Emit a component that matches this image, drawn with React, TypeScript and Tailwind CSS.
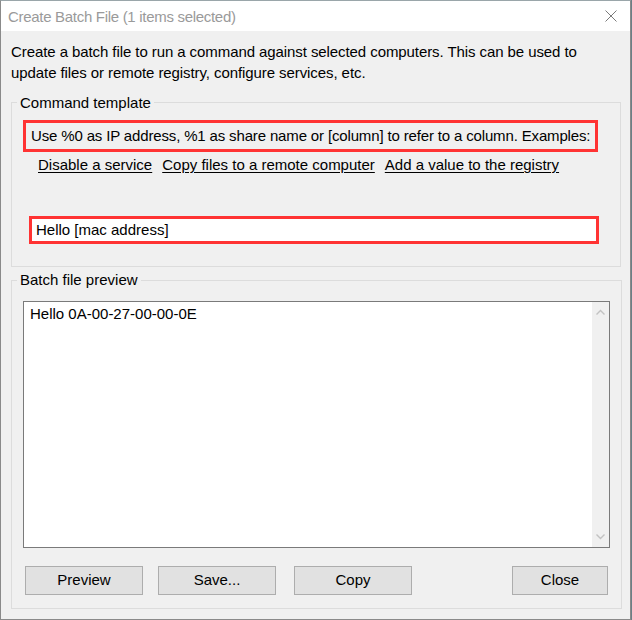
import React from 'react';

const font = { fontFamily: '"Segoe UI", "Liberation Sans", Arial, sans-serif' };

const Chevron = ({ up }: { up?: boolean }) => (
  <svg width="9" height="6" viewBox="0 0 9 6" className="block">
    <path d={up ? 'M0.5 5.5 L4.5 1.5 L8.5 5.5' : 'M0.5 0.5 L4.5 4.5 L8.5 0.5'} fill="none" stroke="#c2c2c2" strokeWidth="1.4" />
  </svg>
);

const WinButton = ({ label, className = '' }: { label: string; className?: string }) => (
  <button className={`h-[29px] bg-[#e1e1e1] border border-[#adadad] text-[15px] text-black ${className}`}>
    {label}
  </button>
);

export default function App() {
  return (
    <div className="w-[632px] h-[620px] bg-[#6b7f86] overflow-hidden" style={font}>
      <div className="w-[631px] h-[620px] flex flex-col bg-[#f0f0f0] border-x border-b border-[#8a8a8a] border-t border-t-[#9aa6aa]">
        {/* title bar */}
        <div className="h-[30px] bg-white flex items-center justify-between pl-[7px] pr-[13px]">
          <span className="pt-[2px] text-[15px] tracking-[-0.3px] text-[#9a9a9a]">Create Batch File (1 items selected)</span>
          <svg width="12" height="12" viewBox="0 0 12 12">
            <path d="M0.5 0.5 L11.5 11.5 M11.5 0.5 L0.5 11.5" stroke="#7a7a7a" strokeWidth="1" />
          </svg>
        </div>

        <div className="flex-1 flex flex-col px-[10px] pt-[10px]">
          <p className="text-[15px] leading-[21px] tracking-[-0.08px] text-black">
            Create a batch file to run a command against selected computers. This can be used to
            <br />
            update files or remote registry, configure services, etc.
          </p>

          {/* Command template */}
          <fieldset className="mt-[10px] w-[610px] h-[174px] border border-[#dcdcdc] px-[11px]">
            <legend className="ml-[-6px] px-[3px] pt-[1px] text-[15px] leading-[18px] text-black">Command template</legend>
            <div className="mt-[8px] h-[32px] w-[575px] border-[3px] border-[#ff3333] flex items-center pl-[5px] text-[15px] tracking-[-0.15px] whitespace-nowrap text-black">
              Use %0 as IP address, %1 as share name or [column] to refer to a column. Examples:
            </div>
            <div className="flex gap-[10px] pl-[15px] mt-[2px] text-[15px] leading-[21px] text-black">
              <span className="underline underline-offset-2">Disable a service</span>
              <span className="underline underline-offset-2">Copy files to a remote computer</span>
              <span className="underline underline-offset-2">Add a value to the registry</span>
            </div>
            <div className="mt-[41px] ml-[6px] h-[28px] w-[570px] border-[3px] border-[#ff3333] bg-white flex items-center pl-[4px] text-[15px] text-black">
              Hello [mac address]
            </div>
          </fieldset>

          {/* Batch file preview */}
          <fieldset className="mt-[4px] w-[610px] h-[338px] border border-[#dcdcdc] px-[11px]">
            <legend className="ml-[-6px] px-[3px] text-[15px] leading-[18px] text-black">Batch file preview</legend>
            <div className="mt-[12px] h-[247px] w-[587px] border border-[#7a7a7a] bg-white flex">
              <div className="flex-1 pl-[6px] pt-[2px] text-[15px] leading-[20px] text-black">Hello 0A-00-27-00-00-0E</div>
              <div className="w-[17px] bg-[#f0f0f0] flex flex-col items-center justify-between py-[7px]">
                <Chevron up />
                <Chevron />
              </div>
            </div>
            <div className="mt-[18px] flex">
              <WinButton label="Preview" className="ml-[2px] w-[118px]" />
              <WinButton label="Save..." className="ml-[15px] w-[118px]" />
              <WinButton label="Copy" className="ml-[18px] w-[118px]" />
              <WinButton label="Close" className="ml-auto mr-[2px] w-[96px]" />
            </div>
          </fieldset>
        </div>
      </div>
    </div>
  );
}
